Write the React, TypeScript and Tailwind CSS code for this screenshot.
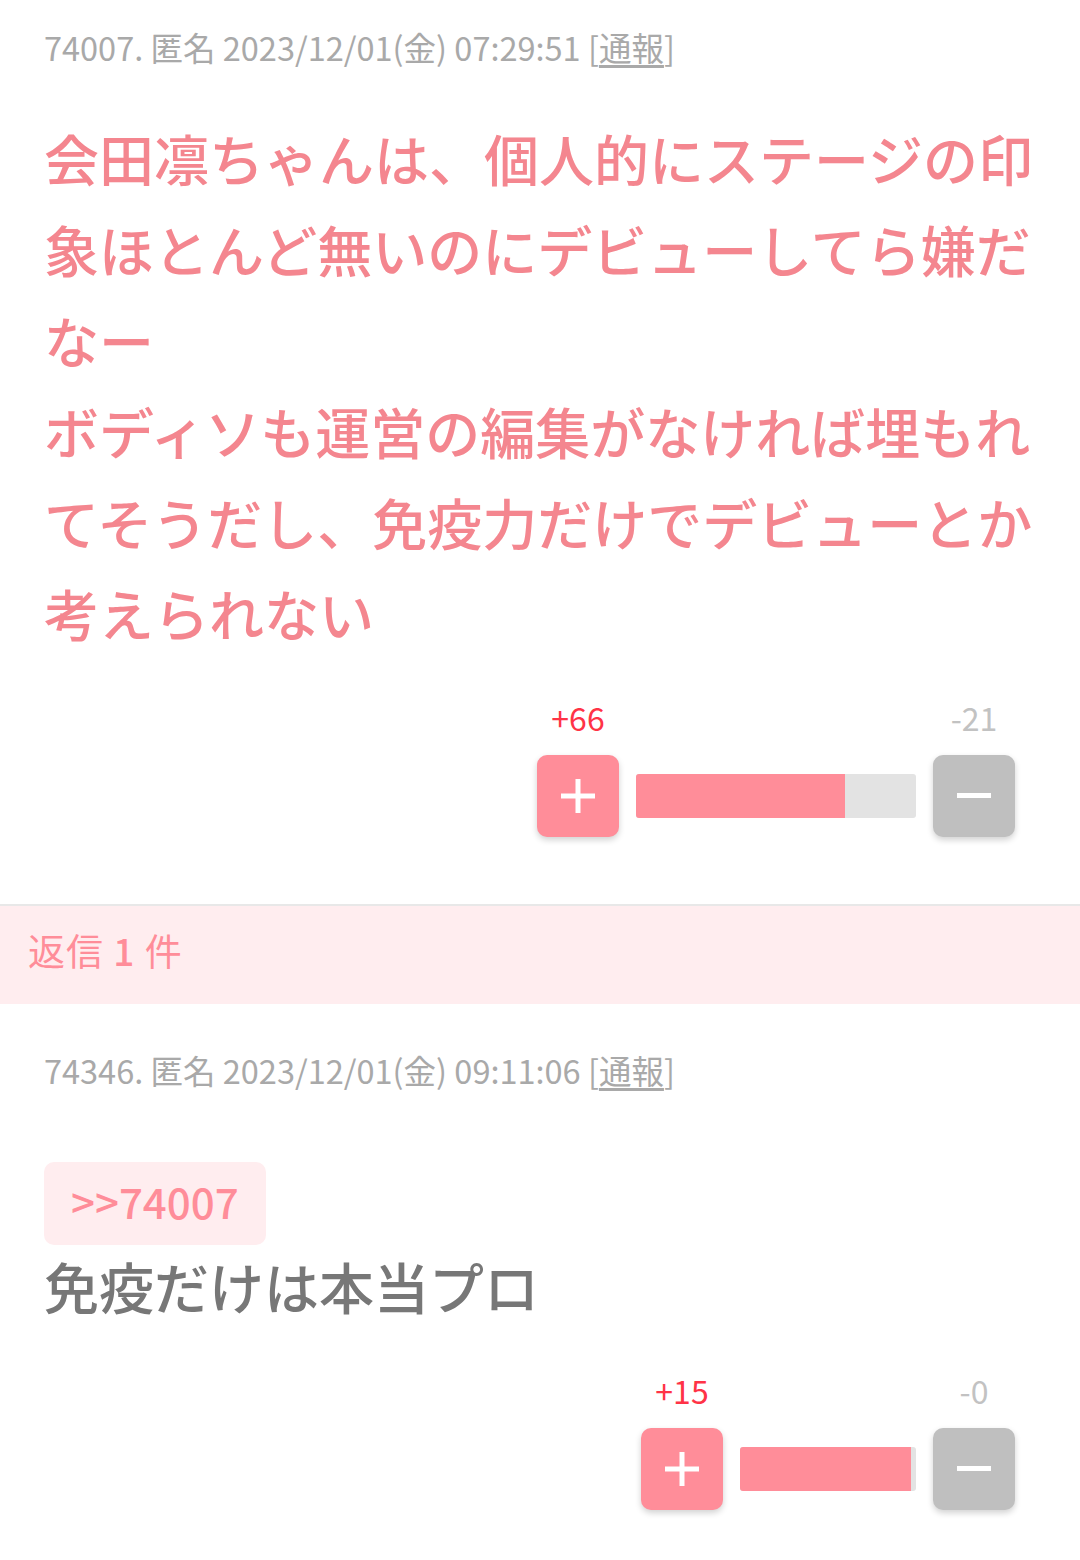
const font = { fontFamily: '"Noto Sans CJK JP", "Roboto", sans-serif' };

function Header({ no, time }: { no: string; time: string }) {
  return (
    <div className="text-[32.5px] leading-[40px] text-[#a9a9a9]">
      {no}. 匿名 2023/12/01(金) {time} <span>[<span className="underline underline-offset-4">通報</span>]</span>
    </div>
  );
}

function Vote({ up, down, barW, fillW }: { up: string; down: string; barW: number; fillW: number }) {
  return (
    <div className="flex flex-col items-end pr-[65px]">
      <div className="flex items-center gap-[17px]">
        <div className="flex flex-col items-center gap-[21px]">
          <div className="text-[32px] leading-[34px] text-[#ff3346]">{up}</div>
          <button className="w-[82px] h-[82px] rounded-[10px] bg-[#ff8d99] shadow-[0_3px_6px_rgba(0,0,0,0.18)] flex items-center justify-center">
            <svg width="34" height="34" viewBox="0 0 34 34">
              <rect x="14.5" y="0" width="5" height="34" fill="white" />
              <rect x="0" y="14.5" width="34" height="5" fill="white" />
            </svg>
          </button>
        </div>
        <div className="mt-[55px] h-[44px] rounded-[3px] bg-[#e3e3e3] overflow-hidden" style={{ width: barW }}>
          <div className="h-full bg-[#ff8d99]" style={{ width: fillW }} />
        </div>
        <div className="flex flex-col items-center gap-[21px]">
          <div className="text-[32px] leading-[34px] text-[#c2c2c2]">{down}</div>
          <button className="w-[82px] h-[82px] rounded-[10px] bg-[#bfbfbf] shadow-[0_3px_6px_rgba(0,0,0,0.18)] flex items-center justify-center">
            <svg width="34" height="6" viewBox="0 0 34 6">
              <rect x="0" y="0" width="34" height="5" fill="white" />
            </svg>
          </button>
        </div>
      </div>
    </div>
  );
}

export default function App() {
  return (
    <div className="w-[1080px] min-h-[1560px] bg-white" style={font}>
      <div className="pl-[44px] pt-[27px]">
        <Header no="74007" time="07:29:51" />
        <p className="mt-[45px] pr-[40px] text-[55px] leading-[91px] font-medium text-[#f4868f]">
          会田凛ちゃんは、個人的にステージの印象ほとんど無いのにデビューしてら嫌だなー
          <br />
          ボディソも運営の編集がなければ埋もれてそうだし、免疫力だけでデビューとか考えられない
        </p>
      </div>
      <div className="mt-[42px]">
        <Vote up="+66" down="-21" barW={280} fillW={209} />
      </div>
      <div className="mt-[67px] border-t-2 border-[#e8e8e8] bg-[#ffedef] h-[100px] pl-[28px] pb-[8px] flex items-center">
        <span className="text-[37px] text-[#ff8d99] tracking-[1px]">返信 <span className="font-medium">1</span> 件</span>
      </div>
      <div className="pl-[44px] pt-[46px]">
        <Header no="74346" time="09:11:06" />
        <div className="mt-[72px] inline-flex h-[83px] items-center rounded-[10px] bg-[#ffedef] px-[27px] pb-[6px] text-[42px] font-medium text-[#ff8d99]">
          &gt;&gt;74007
        </div>
        <p className="-mt-[5px] text-[55px] leading-[91px] font-medium text-[#777777]">免疫だけは本当プロ</p>
      </div>
      <div className="mt-[42px]">
        <Vote up="+15" down="-0" barW={176} fillW={171} />
      </div>
    </div>
  );
}
